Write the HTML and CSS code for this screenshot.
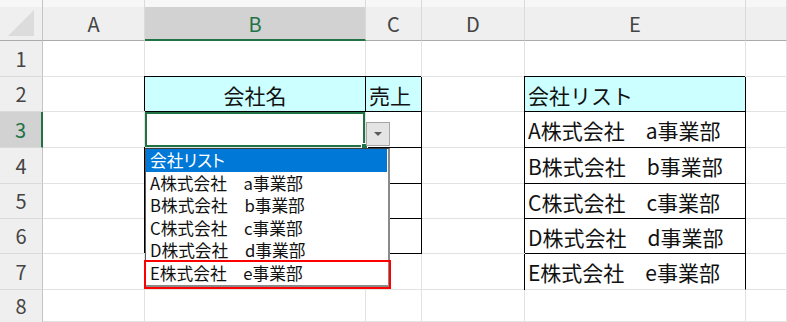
FILE: index.html
```html
<!DOCTYPE html>
<html lang="ja">
  <head>
    <meta charset="UTF-8">
    <title>会社リスト</title>
    <link rel="stylesheet" href="styles.css">
  </head>
  <body>
    <div class="sheet">
      <div class="grid">
        <!-- header row -->
        <div class="hd corner">
          <svg width="30" height="30" viewBox="0 0 30 30"><polygon points="28,2 28,28 2,28" fill="#dcdcdc"/></svg>
        </div>
        <div class="hd col">A</div>
        <div class="hd col sel-col">B</div>
        <div class="hd col">C</div>
        <div class="hd col">D</div>
        <div class="hd col">E</div>
        <div class="hd col"></div>

        <!-- row 1 -->
        <div class="rh">1</div>
        <div class="c"></div><div class="c"></div><div class="c"></div><div class="c"></div><div class="c"></div><div class="c"></div>

        <!-- row 2 -->
        <div class="rh">2</div>
        <div class="c"></div>
        <div class="c bd fill center">会社名</div>
        <div class="c bd fill">売上</div>
        <div class="c"></div>
        <div class="c bd fill">会社リスト</div>
        <div class="c"></div>

        <!-- row 3 -->
        <div class="rh sel-row">3</div>
        <div class="c"></div>
        <div class="c active"></div>
        <div class="c bd"></div>
        <div class="c"></div>
        <div class="c bd">A株式会社　a事業部</div>
        <div class="c"></div>

        <!-- row 4 -->
        <div class="rh">4</div>
        <div class="c"></div>
        <div class="c bd"></div>
        <div class="c bd"></div>
        <div class="c"></div>
        <div class="c bd">B株式会社　b事業部</div>
        <div class="c"></div>

        <!-- row 5 -->
        <div class="rh">5</div>
        <div class="c"></div>
        <div class="c bd"></div>
        <div class="c bd"></div>
        <div class="c"></div>
        <div class="c bd">C株式会社　c事業部</div>
        <div class="c"></div>

        <!-- row 6 -->
        <div class="rh">6</div>
        <div class="c"></div>
        <div class="c bd"></div>
        <div class="c bd"></div>
        <div class="c"></div>
        <div class="c bd">D株式会社　d事業部</div>
        <div class="c"></div>

        <!-- row 7 -->
        <div class="rh">7</div>
        <div class="c"></div>
        <div class="c"></div>
        <div class="c"></div>
        <div class="c"></div>
        <div class="c bd-side">E株式会社　e事業部</div>
        <div class="c"></div>

        <!-- row 8 -->
        <div class="rh last">8</div>
        <div class="c"></div><div class="c"></div><div class="c"></div><div class="c"></div><div class="c"></div><div class="c"></div>
      </div>

      <!-- data validation dropdown -->
      <button class="dd-btn"><span class="tri"></span></button>
      <ul class="dd-list">
        <li class="hi">会社リスト</li>
        <li>A株式会社　a事業部</li>
        <li>B株式会社　b事業部</li>
        <li>C株式会社　c事業部</li>
        <li>D株式会社　d事業部</li>
        <li>E株式会社　e事業部</li>
      </ul>
      <div class="mark"></div>
    </div>
  </body>
</html>
```

FILE: styles.css
```css
html, body {
  margin: 0;
  background: #fff;
}
.sheet {
  position: relative;
  width: 787px;
  height: 322px;
  overflow: hidden;
  font-family: "Noto Sans CJK JP", sans-serif;
  color: #111;
}
.grid {
  display: grid;
  grid-template-columns: 43px 102px 221px 56px 103px 221px 41px;
  grid-template-rows: 41px 36px 35px 36px 36px 35px 35px 36px 32px;
}
.grid > div {
  box-sizing: border-box;
}

/* headers */
.hd {
  background: linear-gradient(#f7f7f7 0 7px, #efefef 7px);
  border-right: 1px solid #dadada;
  border-bottom: 1px solid #ababab;
  display: flex;
  align-items: center;
  justify-content: center;
  padding-top: 7px;
  font-size: 20px;
  color: #444;
}
.corner {
  padding-top: 6px;
  border-right: 1px solid #c4c4c4;
}
.sel-col {
  background: linear-gradient(#f7f7f7 0 7px, #d2d2d2 7px);
  border-bottom: 2px solid #217346;
  color: #217346;
}
.rh {
  background: #efefef;
  border-right: 1px solid #c4c4c4;
  border-bottom: 1px solid #dadada;
  display: flex;
  align-items: center;
  justify-content: center;
  font-size: 20px;
  line-height: 1.2;
  color: #444;
}
.rh.last {
  border-bottom: none;
}
.sel-row {
  background: #d2d2d2;
  border-right: 2px solid #217346;
  color: #217346;
}

/* cells */
.c {
  border-right: 1px solid #e2e2e2;
  border-bottom: 1px solid #e2e2e2;
  display: flex;
  align-items: center;
  padding: 1px 3px 0;
  font-size: 21px;
  white-space: nowrap;
  overflow: hidden;
}
.c.center {
  justify-content: center;
}
.c.fill {
  background: #ccffff;
}
.c.bd {
  border-right: 1px solid #000;
  border-bottom: 1px solid #000;
  box-shadow: -1px -1px 0 #000;
  overflow: visible;
}
.c.bd-side {
  border-right: 1px solid #000;
  box-shadow: -1px 0 0 #000;
  overflow: visible;
}
.c.active {
  position: relative;
  overflow: visible;
  box-shadow: inset 0 0 0 2px #217346;
}
.c.active::after {
  content: "";
  position: absolute;
  right: -3px;
  bottom: -3px;
  width: 5px;
  height: 5px;
  background: #217346;
  border: 1px solid #fff;
}

/* dropdown */
.dd-btn {
  position: absolute;
  left: 366px;
  top: 122px;
  width: 24px;
  height: 24px;
  margin: 0;
  padding: 0;
  background: #e4e4e4;
  border: 1px solid #a6a6a6;
  display: flex;
  align-items: center;
  justify-content: center;
}
.tri {
  width: 0;
  height: 0;
  border-left: 4px solid transparent;
  border-right: 4px solid transparent;
  border-top: 4px solid #5a5a5a;
}
.dd-list {
  position: absolute;
  left: 145px;
  top: 148px;
  width: 245px;
  height: 139px;
  box-sizing: border-box;
  margin: 0;
  padding: 0;
  list-style: none;
  background: #fff;
  border-top: 1px solid #3c3c3c;
  border-left: 1px solid #5a5a5a;
  border-right: 2px solid #8a8a8a;
  border-bottom: 2px solid #8a8a8a;
  font-size: 16.7px;
  color: #111;
}
.dd-list li {
  height: 22.5px;
  line-height: 22.5px;
  padding-left: 4px;
  white-space: nowrap;
}
.dd-list li.hi {
  background: #0078d7;
  color: #fff;
  margin-right: 1px;
  font-feature-settings: "palt";
}
.mark {
  position: absolute;
  left: 144px;
  top: 260px;
  width: 247px;
  height: 29px;
  box-sizing: border-box;
  border: 2px solid #ff0000;
}
```
